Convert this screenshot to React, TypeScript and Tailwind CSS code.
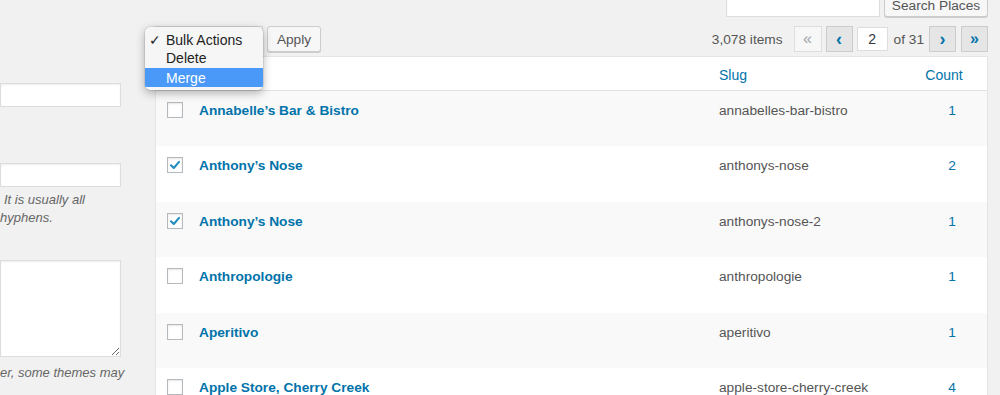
import React from "react";

const rows = [
  { name: "Annabelle\u2019s Bar & Bistro", slug: "annabelles-bar-bistro", count: "1", checked: false },
  { name: "Anthony\u2019s Nose", slug: "anthonys-nose", count: "2", checked: true },
  { name: "Anthony\u2019s Nose", slug: "anthonys-nose-2", count: "1", checked: true },
  { name: "Anthropologie", slug: "anthropologie", count: "1", checked: false },
  { name: "Aperitivo", slug: "aperitivo", count: "1", checked: false },
  { name: "Apple Store, Cherry Creek", slug: "apple-store-cherry-creek", count: "4", checked: false },
];

function Checkbox({ checked }: { checked: boolean }) {
  return (
    <span className="w-[16px] h-[16px] border border-[#b4b9be] bg-white shadow-[inset_0_1px_2px_rgba(0,0,0,0.1)] flex items-center justify-center">
      {checked && (
        <svg width="14" height="14" viewBox="0 0 14 14">
          <path d="M3 7.2 L5.8 10 L11 3.8" stroke="#1e8cbe" strokeWidth="2" fill="none" strokeLinecap="round" strokeLinejoin="round" />
        </svg>
      )}
    </span>
  );
}

export default function App() {
  return (
    <div className="relative w-[1000px] h-[395px] overflow-hidden bg-[#f1f1f1] flex font-['Liberation_Sans',Arial,sans-serif]">
      {/* Left form column */}
      <div className="w-[155px] shrink-0 flex flex-col">
        <div className="mt-[83px] w-[121px] h-[24px] bg-white border border-[#ddd] shadow-[inset_0_1px_2px_rgba(0,0,0,0.07)]" />
        <div className="mt-[56px] w-[121px] h-[24px] bg-white border border-[#ddd] shadow-[inset_0_1px_2px_rgba(0,0,0,0.07)]" />
        <p className="mt-[4px] text-[13px] leading-[18px] italic text-[#666] whitespace-nowrap">
          <span className="block pl-[4px]">It is usually all</span>
          <span className="block">hyphens.</span>
        </p>
        <textarea
          readOnly
          className="mt-[33px] w-[121px] h-[97px] bg-white border border-[#ddd] shadow-[inset_0_1px_2px_rgba(0,0,0,0.07)] outline-none"
        />
        <p className="mt-[7px] text-[13px] leading-[18px] italic text-[#666] whitespace-nowrap">er, some themes may</p>
      </div>

      {/* Right column */}
      <div className="w-[833px] shrink-0 flex flex-col">
        {/* search */}
        <div className="mt-[-11px] flex justify-end gap-[4px] h-[29px]">
          <div className="w-[154px] h-[28px] bg-white border border-[#ddd] shadow-[inset_0_1px_2px_rgba(0,0,0,0.07)]" />
          <div className="w-[104px] h-[28px] bg-[#f7f7f7] border border-[#ccc] rounded-[3px] shadow-[0_1px_0_#ccc] text-[13.7px] text-[#555] flex items-end justify-center pb-[2px] leading-[16px]">
            Search Places
          </div>
        </div>

        {/* tablenav */}
        <div className="mt-[9px] h-[26px] flex items-center">
          <div className="w-[108px] h-[26px] bg-white border border-[#ddd]" />
          <div className="ml-[4px] w-[54px] h-[26px] bg-[#f7f7f7] border border-[#ccc] rounded-[3px] shadow-[0_1px_0_#ccc] text-[13.7px] text-[#555] flex items-center justify-center pt-[2px]">
            Apply
          </div>
          <div className="ml-auto flex items-center h-[26px]">
            <span className="text-[13.7px] text-[#555] mr-[11px] pt-[2px]">3,078 items</span>
            <span className="w-[28px] h-[26px] bg-[#f7f7f7] border border-[#ddd] text-[#a0a5aa] text-[16px] flex items-center justify-center leading-none">«</span>
            <span className="ml-[4px] w-[27px] h-[26px] bg-[#e5e5e5] border border-[#ccc] text-[#0073aa] text-[18px] font-bold flex items-center justify-center leading-none pb-[1px]">‹</span>
            <span className="ml-[4px] w-[31px] h-[24px] bg-white border border-[#ddd] text-[14px] text-[#32373c] flex items-center justify-center pt-[1px]">2</span>
            <span className="ml-[6px] text-[13.7px] text-[#555] pt-[2px]">of 31</span>
            <span className="ml-[5px] w-[27px] h-[26px] bg-[#e5e5e5] border border-[#ccc] text-[#0073aa] text-[18px] font-bold flex items-center justify-center leading-none pb-[1px]">›</span>
            <span className="ml-[5px] w-[27px] h-[26px] bg-[#e5e5e5] border border-[#ccc] text-[#0073aa] text-[16px] font-bold flex items-center justify-center leading-none">»</span>
          </div>
        </div>

        {/* table */}
        <div className="mt-[4px] border border-[#e5e5e5] bg-white shadow-[0_1px_1px_rgba(0,0,0,0.04)] flex flex-col">
          <div className="h-[34px] border-b border-[#e1e1e1] flex items-center pt-[3px] text-[14px] text-[#0073aa]">
            <div className="w-[33px] shrink-0" />
            <div className="w-[520px] shrink-0" />
            <div className="w-[192px] shrink-0 pl-[10px]">Slug</div>
            <div className="w-[86px] shrink-0 text-center">Count</div>
          </div>
          {rows.map((r, i) => (
            <div key={i} className={`h-[55.4px] flex shrink-0 ${i % 2 === 0 ? "bg-[#f9f9f9]" : "bg-white"}`}>
              <div className="w-[33px] shrink-0 pl-[11px] pt-[11px]">
                <Checkbox checked={r.checked} />
              </div>
              <div className="w-[520px] shrink-0 pl-[10px] pt-[10px] text-[13.7px] leading-[20px] font-bold text-[#0073aa] whitespace-nowrap">
                {r.name}
              </div>
              <div className="w-[192px] shrink-0 pl-[10px] pt-[10px] text-[13.7px] leading-[20px] text-[#555] whitespace-nowrap">
                {r.slug}
              </div>
              <div className="w-[86px] shrink-0 pl-[16px] pt-[10px] text-center text-[13.7px] leading-[20px] text-[#0073aa]">
                {r.count}
              </div>
            </div>
          ))}
        </div>
      </div>

      {/* native dropdown menu */}
      <div className="absolute left-[145px] top-[27px] w-[118px] h-[63px] bg-[#f6f6f6] rounded-[5px] shadow-[0_3px_10px_rgba(0,0,0,0.3),0_0_0_0.5px_rgba(0,0,0,0.15)] pt-[4px] text-[14px] text-[#222] overflow-hidden">
        <div className="h-[18px] flex items-center leading-[18px]">
          <span className="w-[21px] pl-[4px] text-[14px]">✓</span>
          <span>Bulk Actions</span>
        </div>
        <div className="h-[18px] flex items-center leading-[18px] pl-[21px]">Delete</div>
        <div className="h-[19px] mt-[1px] flex items-center leading-[18px] pl-[21px] bg-[#4a98f7] text-white">Merge</div>
      </div>
    </div>
  );
}
